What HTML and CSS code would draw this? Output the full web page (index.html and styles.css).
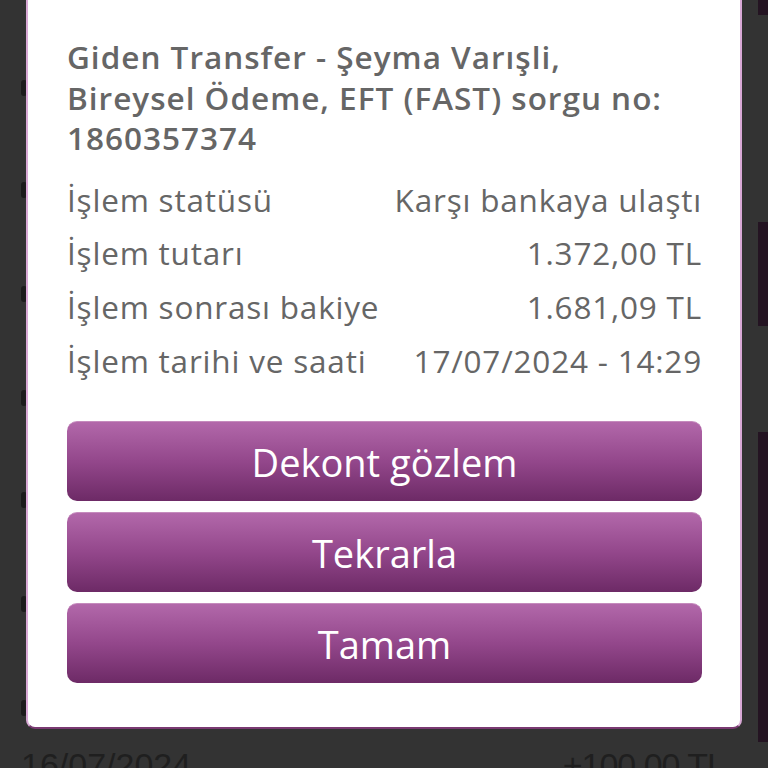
FILE: index.html
```html
<!DOCTYPE html>
<html lang="tr">
<head>
<meta charset="utf-8">
<link rel="stylesheet" href="styles.css">
</head>
<body>
<div class="screen">
  <div class="backdrop">
    <div class="marks">
      <span class="mark" style="top:80px"></span>
      <span class="mark" style="top:182px"></span>
      <span class="mark" style="top:286px"></span>
      <span class="mark" style="top:390px"></span>
      <span class="mark" style="top:492px"></span>
      <span class="mark" style="top:596px"></span>
      <span class="mark" style="top:700px"></span>
    </div>
    <span class="rbar" style="top:0;height:15px"></span>
    <span class="rbar" style="top:222px;height:104px"></span>
    <span class="rbar" style="top:432px;height:310px"></span>
    <div class="bottom-row">
      <span>16/07/2024</span>
      <span class="amount">+100,00 TL</span>
    </div>
  </div>
  <div class="modal">
    <div class="title">Giden Transfer - Şeyma Varışli,<br>Bireysel Ödeme, EFT (FAST) sorgu no:<br>1860357374</div>
    <div class="rows">
      <div class="row"><span>İşlem statüsü</span><span>Karşı bankaya ulaştı</span></div>
      <div class="row"><span>İşlem tutarı</span><span>1.372,00 TL</span></div>
      <div class="row"><span>İşlem sonrası bakiye</span><span>1.681,09 TL</span></div>
      <div class="row"><span>İşlem tarihi ve saati</span><span>17/07/2024 - 14:29</span></div>
    </div>
    <div class="buttons">
      <button class="btn">Dekont gözlem</button>
      <button class="btn">Tekrarla</button>
      <button class="btn">Tamam</button>
    </div>
  </div>
</div>
</body>
</html>
```
FILE: styles.css
```css
html, body {
  margin: 0;
  padding: 0;
}
body {
  width: 768px;
  height: 768px;
  overflow: hidden;
  background: #333333;
  font-family: "Open Sans", "Noto Sans", sans-serif;
}
.screen {
  position: relative;
  width: 768px;
  height: 768px;
}
.backdrop {
  position: absolute;
  inset: 0;
}
.mark {
  position: absolute;
  left: 21px;
  width: 6px;
  height: 16px;
  border-radius: 3px;
  background: #1c1c1c;
}
.rbar {
  position: absolute;
  left: 758px;
  width: 10px;
  background: #241422;
}
.bottom-row {
  position: absolute;
  left: 21px;
  right: 43px;
  top: 748px;
  display: flex;
  justify-content: space-between;
  font-family: "Liberation Sans", sans-serif;
  font-size: 34px;
  color: #1f1f1f;
  line-height: 1;
}
.amount {
  letter-spacing: -1px;
}
.modal {
  position: absolute;
  left: 26px;
  top: -20px;
  width: 716px;
  height: 749px;
  box-sizing: border-box;
  background: #ffffff;
  border: 2px solid #d9a9d6;
  border-bottom-color: #7a3a72;
  border-radius: 0 0 9px 9px;
  padding: 55px 38px 0 39px;
  color: #666666;
}
.title {
  font-size: 31.5px;
  font-weight: 600;
  line-height: 40.5px;
  letter-spacing: 1px;
  white-space: nowrap;
}
.rows {
  margin-top: 14px;
}
.row {
  display: flex;
  justify-content: space-between;
  font-size: 31.5px;
  line-height: 53.7px;
  letter-spacing: 0.8px;
}
.buttons {
  margin-top: 34px;
  display: flex;
  flex-direction: column;
  gap: 11px;
}
.btn {
  height: 80px;
  border: none;
  border-top: 1px solid #c58bbd;
  border-radius: 10px;
  background: linear-gradient(#b268aa, #93478b 50%, #6d2a66);
  color: #ffffff;
  font-family: "Open Sans", "Noto Sans", sans-serif;
  font-size: 38px;
  padding: 0;
}
```
